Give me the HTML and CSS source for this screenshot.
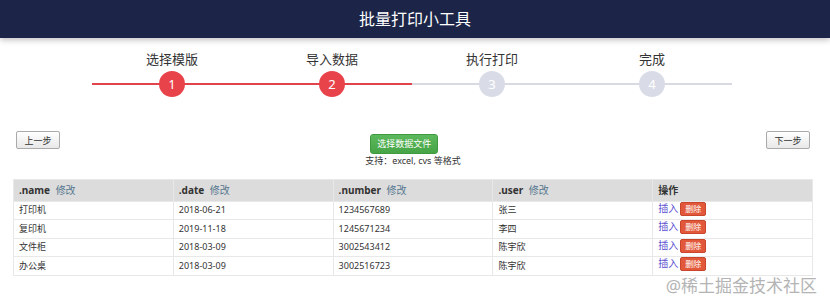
FILE: index.html
```html
<!DOCTYPE html>
<html lang="zh-CN">
<head>
    <meta charset="UTF-8">
    <meta name="viewport" content="width=device-width, initial-scale=1.0">
    <title>批量打印小工具</title>
    <link rel="stylesheet" href="styles.css">
</head>
<body>
    <header class="top-bar">
        <h1>批量打印小工具</h1>
    </header>

    <ul class="steps">
        <li class="step done">
            <span class="step-label">选择模版</span>
            <span class="step-num">1</span>
        </li>
        <li class="step done">
            <span class="step-label">导入数据</span>
            <span class="step-num">2</span>
        </li>
        <li class="step">
            <span class="step-label">执行打印</span>
            <span class="step-num">3</span>
        </li>
        <li class="step">
            <span class="step-label">完成</span>
            <span class="step-num">4</span>
        </li>
    </ul>

    <div class="toolbar">
        <button class="btn-plain">上一步</button>
        <div class="upload">
            <button class="btn-green">选择数据文件</button>
            <p class="hint">支持：excel, cvs 等格式</p>
        </div>
        <button class="btn-plain">下一步</button>
    </div>

    <table class="data-table">
        <thead>
            <tr>
                <th>.name <a class="edit">修改</a></th>
                <th>.date <a class="edit">修改</a></th>
                <th>.number <a class="edit">修改</a></th>
                <th>.user <a class="edit">修改</a></th>
                <th>操作</th>
            </tr>
        </thead>
        <tbody>
            <tr>
                <td>打印机</td><td>2018-06-21</td><td>1234567689</td><td>张三</td>
                <td><div class="ops"><a class="insert">插入</a><button class="btn-del">删除</button></div></td>
            </tr>
            <tr>
                <td>复印机</td><td>2019-11-18</td><td>1245671234</td><td>李四</td>
                <td><div class="ops"><a class="insert">插入</a><button class="btn-del">删除</button></div></td>
            </tr>
            <tr>
                <td>文件柜</td><td>2018-03-09</td><td>3002543412</td><td>陈宇欣</td>
                <td><div class="ops"><a class="insert">插入</a><button class="btn-del">删除</button></div></td>
            </tr>
            <tr>
                <td>办公桌</td><td>2018-03-09</td><td>3002516723</td><td>陈宇欣</td>
                <td><div class="ops"><a class="insert">插入</a><button class="btn-del">删除</button></div></td>
            </tr>
        </tbody>
    </table>

    <div class="watermark">@稀土掘金技术社区</div>
</body>
</html>
```

FILE: styles.css
```css
body {
    margin: 0;
    font-family: "Noto Sans", "Noto Sans CJK SC", sans-serif;
    color: #333;
    background: #fff;
    position: relative;
    height: 302px;
    overflow: hidden;
}
.top-bar {
    height: 38px;
    background-color: #1c2547;
    box-shadow: 0 2px 6px rgba(0, 0, 0, 0.25);
    text-align: center;
}
.top-bar h1 {
    margin: 0;
    font-size: 16px;
    font-weight: normal;
    line-height: 38px;
    color: #fff;
}
.steps {
    display: flex;
    width: 640px;
    margin: 12px 0 0 92px;
    padding: 0;
    list-style: none;
}
.step {
    flex: 1;
    position: relative;
    display: flex;
    flex-direction: column;
    align-items: center;
}
.step::before {
    content: "";
    position: absolute;
    left: 0;
    right: 0;
    top: 33px;
    height: 2px;
    background-color: #d8dae2;
}
.step.done::before {
    background-color: #e0434b;
}
.step-label {
    font-size: 13px;
    line-height: 18px;
    color: #333;
}
.step-num {
    position: relative;
    margin-top: 3px;
    width: 26px;
    height: 26px;
    border-radius: 50%;
    background-color: #d9dce6;
    color: #fff;
    font-size: 13px;
    line-height: 26px;
    text-align: center;
}
.step.done .step-num {
    background-color: #e8434a;
}
.toolbar {
    display: flex;
    justify-content: space-between;
    align-items: flex-start;
    margin-top: 33px;
    padding: 0 20px 0 16px;
}
.btn-plain {
    width: 44px;
    height: 18px;
    margin-top: 1px;
    padding: 0;
    border: 1px solid #aaa;
    border-radius: 2px;
    background: linear-gradient(#fff, #e8e8e8);
    font-family: inherit;
    font-size: 9px;
    color: #333;
}
.upload {
    text-align: left;
}
.btn-green {
    width: 68px;
    height: 20px;
    margin-left: 5px;
    padding: 0;
    border: 1px solid #3f9a3f;
    border-radius: 3px;
    background: linear-gradient(#5cb85c, #46a546);
    font-family: inherit;
    font-size: 9px;
    color: #fff;
}
.hint {
    margin: 0;
    font-size: 9px;
    line-height: 13px;
    color: #333;
}
.data-table {
    width: 800px;
    margin: 12px 0 0 13px;
    border-collapse: collapse;
    table-layout: fixed;
    border: 1px solid #e6e6e6;
}
.data-table th {
    height: 21px;
    padding: 0 5px;
    background-color: #dcdcdc;
    border: 1px solid #e8e8e8;
    font-size: 10px;
    line-height: 14px;
    font-weight: bold;
    text-align: left;
}
.edit {
    margin-left: 3px;
    font-weight: normal;
    color: #56778f;
}
.data-table td {
    height: 17.5px;
    padding: 0 5px;
    border: 1px solid #e8e8e8;
    font-size: 9px;
    line-height: 12px;
}
.ops {
    display: flex;
    align-items: flex-start;
    gap: 2px;
    height: 15px;
    margin-top: -2px;
}
.insert {
    color: #5a4fd0;
    font-size: 10px;
    line-height: 12px;
}
.btn-del {
    width: 26px;
    height: 14px;
    padding: 0;
    border: 1px solid #c9452b;
    border-radius: 2px;
    background-color: #e2583a;
    font-family: inherit;
    font-size: 8px;
    line-height: 12px;
    color: #fff;
}
.watermark {
    position: absolute;
    right: 13px;
    bottom: 5px;
    font-size: 17px;
    color: #b4b4b4;
    text-shadow: 0 0 2px #fff;
}
```
